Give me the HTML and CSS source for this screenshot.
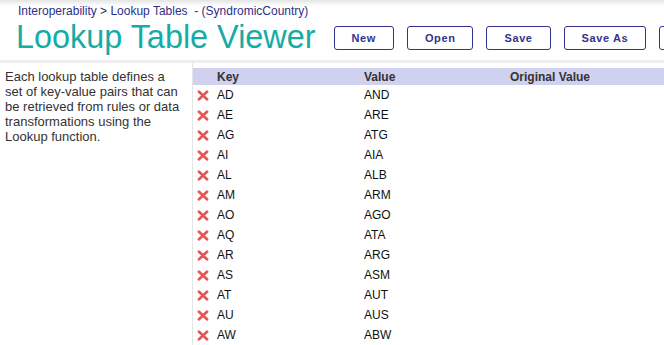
FILE: index.html
```html
<!DOCTYPE html>
<html>
<head>
    <meta charset="UTF-8">
    <title>Lookup Table Viewer</title>
    <link rel="stylesheet" href="styles.css">
</head>
<body>
    <div class="header">
        <div class="breadcrumb">
            <a href="#">Interoperability</a> <span class="sep">&gt;</span> <a href="#">Lookup Tables</a>
            <span class="table-name">&nbsp;- (SyndromicCountry)</span>
        </div>
        <div class="title-row">
            <h1>Lookup Table Viewer</h1>
            <div class="toolbar">
                <button class="btn">New</button>
                <button class="btn">Open</button>
                <button class="btn">Save</button>
                <button class="btn">Save As</button>
                <button class="btn btn-cut"></button>
            </div>
        </div>
    </div>

    <div class="main">
        <div class="sidebar">
            Each lookup table defines a set of key-value pairs that can be retrieved from rules or data transformations using the Lookup function.
        </div>
        <div class="table-wrap">
            <div class="grid-row grid-head">
                <div></div>
                <div>Key</div>
                <div>Value</div>
                <div>Original Value</div>
            </div>
            <div id="rows"></div>
        </div>
    </div>
    <script src="app.js"></script>
</body>
</html>
```

FILE: styles.css
```css
body {
    margin: 0;
    font-family: "Liberation Sans", Arial, sans-serif;
    background: #fff;
    color: #222;
    overflow: hidden;
}

.header {
    height: 60px;
    background: linear-gradient(to bottom, #e4e4e4 0px, #fbfbfb 5px, #fff 7px);
    box-sizing: border-box;
    padding: 4px 0 0 16px;
}

.breadcrumb {
    font-size: 12px;
    color: #2e2e86;
    padding-left: 2px;
    height: 14px;
    line-height: 14px;
}

.breadcrumb a {
    color: #2e2e86;
    text-decoration: none;
}

.breadcrumb .sep {
    color: #333;
}

.title-row {
    display: flex;
    align-items: flex-end;
    white-space: nowrap;
}

.title-row h1 {
    margin: 0;
    font-weight: 400;
    font-size: 32.4px;
    line-height: 38px;
    color: #15aca6;
}

.toolbar {
    display: flex;
    gap: 13px;
    margin-left: 18px;
    margin-bottom: 6px;
}

.btn {
    height: 24px;
    padding: 0 17px;
    border: 1px solid #33338c;
    border-radius: 3px;
    background: #fff;
    color: #33338c;
    font-family: "Liberation Sans", Arial, sans-serif;
    font-size: 11px;
    font-weight: 700;
    letter-spacing: 0.6px;
    flex-shrink: 0;
}

.btn-cut {
    width: 60px;
}

.main {
    display: flex;
    border-top: 3px solid #eeeeee;
    height: 290px;
}

.sidebar {
    width: 180px;
    padding: 6px 7px 0 5px;
    font-size: 13px;
    line-height: 15px;
    color: #333;
    border-right: 1px solid #e6e6e6;
    flex-shrink: 0;
}

.table-wrap {
    flex: 1;
    padding-top: 5px;
}

.grid-row {
    display: grid;
    grid-template-columns: 24px 147px 146px 1fr;
    align-items: center;
    height: 20px;
    font-size: 12px;
    color: #111;
}

.grid-head {
    height: 17px;
    background: #d0d0ef;
    font-weight: 700;
    color: #333;
}

.del {
    display: block;
    margin-left: 4px;
    width: 12px;
    height: 11px;
}
```

FILE: app.js
```js
var data = [
    ["AD", "AND"], ["AE", "ARE"], ["AG", "ATG"], ["AI", "AIA"],
    ["AL", "ALB"], ["AM", "ARM"], ["AO", "AGO"], ["AQ", "ATA"],
    ["AR", "ARG"], ["AS", "ASM"], ["AT", "AUT"], ["AU", "AUS"],
    ["AW", "ABW"]
];

var icon = '<svg class="del" viewBox="0 0 12 11"><path d="M2 1.8 L10 9.2 M10 1.8 L2 9.2" stroke="#e25858" stroke-width="2.8" stroke-linecap="round"/></svg>';

var html = "";
data.forEach(function (r) {
    html += '<div class="grid-row"><div>' + icon + '</div><div>' + r[0] + '</div><div>' + r[1] + '</div><div></div></div>';
});
document.getElementById("rows").innerHTML = html;
```
